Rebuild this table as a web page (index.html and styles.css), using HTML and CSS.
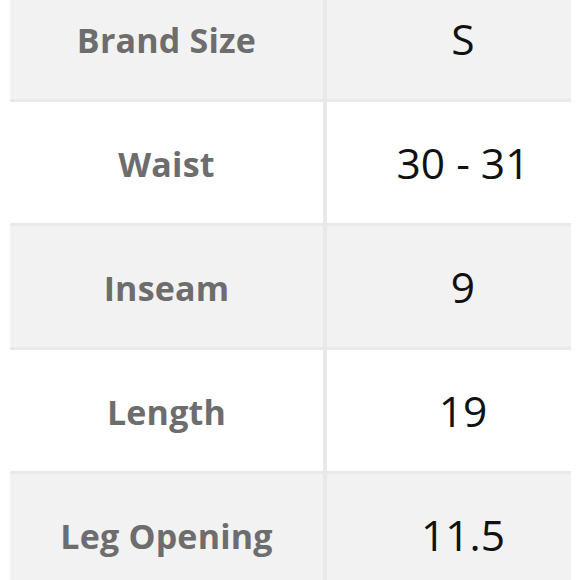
FILE: index.html
```html
<!DOCTYPE html>
<html>
<head>
<meta charset="utf-8">
<link rel="stylesheet" href="styles.css">
</head>
<body>
<div class="table">
  <div class="cell label shade">Brand Size</div><div class="cell value shade">S</div>
  <div class="cell label">Waist</div><div class="cell value">30 - 31</div>
  <div class="cell label shade">Inseam</div><div class="cell value shade">9</div>
  <div class="cell label">Length</div><div class="cell value">19</div>
  <div class="cell label shade">Leg Opening</div><div class="cell value shade">11.5</div>
</div>
</body>
</html>
```
FILE: styles.css
```css
html, body { margin: 0; padding: 0; background: #fff; overflow: hidden; }
.table {
  margin: -22px 9px 0 10px;
  display: grid;
  grid-template-columns: 313px 1fr;
  grid-auto-rows: 121px;
  column-gap: 4px;
  row-gap: 3px;
  background: #e9e9e9;
}
.cell {
  background: #fff;
  display: flex;
  align-items: center;
  justify-content: center;
}
.shade { background: #f2f2f2; }
.label {
  font-family: "Open Sans", "Noto Sans", sans-serif;
  font-weight: 700;
  font-size: 34px;
  letter-spacing: 0.2px;
  color: #6d6d6d;
  padding-top: 3px;
}
.value {
  font-family: "Open Sans", "Noto Sans", sans-serif;
  font-weight: 400;
  font-size: 42.5px;
  color: #111;
  padding-left: 28px;
}
```
